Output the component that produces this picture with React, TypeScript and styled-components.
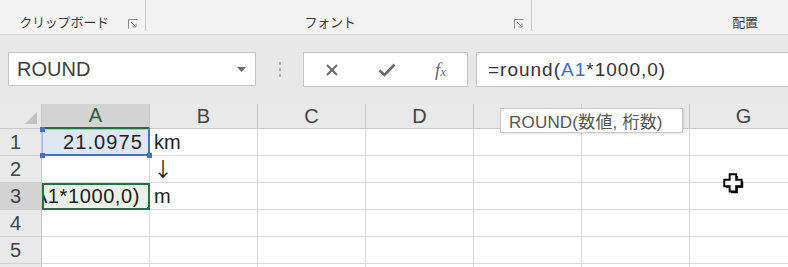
import React from 'react';
import styled, { createGlobalStyle } from 'styled-components';

const GlobalStyle = createGlobalStyle`
  html, body { margin: 0; padding: 0; background: #ffffff; }
  body { font-family: "Liberation Sans", Arial, sans-serif; overflow: hidden; }
`;

const Page = styled.div`
  position: relative;
  width: 788px;
  height: 267px;
  overflow: hidden;
  background: #ffffff;
`;

/* ---------- ribbon ---------- */

const Ribbon = styled.div`
  display: flex;
  align-items: flex-start;
  height: 34px;
  background: #f3f3f3;
  border-bottom: 1px solid #d5d5d5;
`;

const Group = styled.div<{ $w: number; $sep?: boolean }>`
  flex: 0 0 ${p => p.$w}px;
  height: 31px;
  display: flex;
  align-items: flex-end;
  box-sizing: border-box;
  border-right: ${p => (p.$sep ? '1px solid #c9c9c9' : 'none')};
  padding-right: ${p => (p.$sep ? 7 : 0)}px;
`;

const GroupLabel = styled.div`
  flex: 1;
  text-align: center;
  font-family: "Noto Sans CJK JP", sans-serif;
  font-size: 13px;
  line-height: 18px;
  color: #3c3c3c;
  letter-spacing: -0.2px;
`;

const Launcher = styled.svg`
  flex: 0 0 10px;
  width: 10px;
  height: 10px;
  margin-bottom: 2px;
`;

/* ---------- formula bar ---------- */

const FormulaArea = styled.div`
  display: flex;
  align-items: flex-start;
  height: 69px;
  padding: 17px 0 0 8px;
  box-sizing: border-box;
  background: #e8e8e8;
`;

const NameBox = styled.div`
  flex: 0 0 248px;
  height: 34px;
  box-sizing: border-box;
  display: flex;
  align-items: center;
  justify-content: space-between;
  padding: 0 9px 0 8px;
  background: #ffffff;
  border: 1px solid #c6c6c6;
  font-size: 20px;
  color: #404040;
`;

const DropArrow = styled.svg`
  width: 9px;
  height: 5px;
`;

const Dots = styled.div`
  flex: 0 0 47px;
  height: 34px;
  display: flex;
  flex-direction: column;
  align-items: center;
  justify-content: center;
  gap: 3px;
  & > span {
    width: 2px;
    height: 3px;
    background: #b0b0b0;
  }
`;

const ButtonBox = styled.div`
  flex: 0 0 165px;
  height: 35px;
  box-sizing: border-box;
  display: flex;
  align-items: center;
  justify-content: space-between;
  padding: 0 21px 0 21px;
  background: #ffffff;
  border: 1px solid #c6c6c6;
`;

const Fx = styled.span`
  font-family: "Liberation Serif", "Times New Roman", serif;
  font-style: italic;
  font-size: 19px;
  color: #6a6a6a;
  & > small { font-size: 13px; }
`;

const FormulaInput = styled.div`
  flex: 1;
  height: 35px;
  margin-left: 8px;
  box-sizing: border-box;
  display: flex;
  align-items: center;
  padding-left: 11px;
  background: #ffffff;
  border: 1px solid #c6c6c6;
  border-right: none;
  font-size: 19px;
  color: #333333;
  letter-spacing: 1px;
`;

const Ref = styled.span`
  color: #3b6fc0;
`;

/* ---------- grid ---------- */

const Sheet = styled.div`
  display: grid;
  grid-template-columns: 42px repeat(7, 108px);
  grid-template-rows: 25px repeat(6, 27px);
  background: #ffffff;
`;

const Corner = styled.div`
  background: #e9e9e9;
  border-right: 1px solid #c8c8c8;
  border-bottom: 1px solid #c8c8c8;
  display: flex;
  align-items: flex-end;
  justify-content: flex-end;
  padding: 0 4px 4px 0;
`;

const ColHead = styled.div<{ $active?: boolean }>`
  box-sizing: border-box;
  display: flex;
  align-items: center;
  justify-content: center;
  font-size: 20px;
  color: ${p => (p.$active ? '#2f5d3f' : '#444444')};
  background: ${p => (p.$active ? '#d3d3d3' : '#e9e9e9')};
  border-right: 1px solid #c8c8c8;
  border-bottom: ${p => (p.$active ? '2px solid #217346' : '1px solid #c8c8c8')};
`;

const RowHead = styled.div<{ $active?: boolean }>`
  box-sizing: border-box;
  display: flex;
  align-items: center;
  padding-left: 10px;
  font-size: 20px;
  color: #444444;
  background: ${p => (p.$active ? '#d3d3d3' : '#e9e9e9')};
  border-right: 1px solid #c8c8c8;
  border-bottom: 1px solid #d0d0d0;
`;

const Cell = styled.div<{ $align?: 'left' | 'right'; $pad?: number }>`
  position: relative;
  box-sizing: border-box;
  display: flex;
  align-items: center;
  justify-content: ${p => (p.$align === 'right' ? 'flex-end' : 'flex-start')};
  padding: 0 4px 0 ${p => p.$pad ?? 4}px;
  font-size: 20px;
  color: #222222;
  white-space: nowrap;
  border-right: 1px solid #dadada;
  border-bottom: 1px solid #dadada;
`;

const Arrow = styled.span`
  font-family: "Noto Sans CJK JP", sans-serif;
  font-size: 20px;
  line-height: 1;
  color: #1a1a1a;
`;

const RefCell = styled(Cell)`
  background: #dfe7f3;
  border-top: 1px solid #a9bfe2;
  border-left: 1px solid #a9bfe2;
  border-right: 2px solid #4472c4;
  border-bottom: 2px solid #4472c4;
  padding-right: 5px;
  letter-spacing: 1.1px;
`;

const EditCell = styled(Cell)`
  overflow: hidden;
  justify-content: flex-end;
  background: #eaf1e6;
  border: 2px solid #217346;
  padding-right: 8px;
  font-size: 20px;
  letter-spacing: 0.6px;
  color: #1d1d1d;
`;

const Handle = styled.span<{ $color: string; $x: 'l' | 'r'; $y: 't' | 'b' }>`
  position: absolute;
  width: 5px;
  height: 5px;
  background: ${p => p.$color};
  ${p => (p.$x === 'l' ? 'left: -3px;' : 'right: -4px;')}
  ${p => (p.$y === 't' ? 'top: -3px;' : 'bottom: -4px;')}
  z-index: 2;
`;

const Tooltip = styled.div`
  position: absolute;
  left: 500px;
  top: 108px;
  width: 183px;
  height: 25px;
  box-sizing: border-box;
  display: flex;
  align-items: center;
  padding-left: 8px;
  background: #ffffff;
  border: 1px solid #c9c9c9;
  box-shadow: 1px 1px 2px rgba(0, 0, 0, 0.12);
  font-family: "Liberation Sans", "Noto Sans CJK JP", sans-serif;
  font-size: 17px;
  letter-spacing: 0.2px;
  color: #555555;
`;

const Cursor = styled.svg`
  position: absolute;
  left: 721px;
  top: 171px;
  width: 26px;
  height: 26px;
`;

const cols = ['A', 'B', 'C', 'D', 'E', 'F', 'G'];

const LauncherIcon = () => (
  <Launcher viewBox="0 0 10 10">
    <path d="M0.5 9.5V0.5H9.5" fill="none" stroke="#8a8a8a" strokeWidth="1" />
    <path d="M3 3L8 8M8 4.5V8H4.5" fill="none" stroke="#8a8a8a" strokeWidth="1" />
  </Launcher>
);

export default function App() {
  const rows = [1, 2, 3, 4, 5, 6];

  const renderCell = (r: number, c: number) => {
    const key = `${r}-${c}`;
    if (r === 1 && c === 0) {
      return (
        <RefCell key={key} $align="right">
          21.0975
          <Handle $color="#4472c4" $x="l" $y="t" />
          <Handle $color="#4472c4" $x="l" $y="b" />
          <Handle $color="#4472c4" $x="r" $y="b" />
        </RefCell>
      );
    }
    if (r === 3 && c === 0) {
      return (
        <EditCell key={key}>
          <span>=round(A1*1000,0)</span>
          <Handle $color="#217346" $x="r" $y="b" />
        </EditCell>
      );
    }
    if (r === 1 && c === 1) return <Cell key={key}>km</Cell>;
    if (r === 2 && c === 1)
      return (
        <Cell key={key} $pad={3}>
          <Arrow>↓</Arrow>
        </Cell>
      );
    if (r === 3 && c === 1) return <Cell key={key}>m</Cell>;
    return <Cell key={key} />;
  };

  return (
    <Page>
      <GlobalStyle />
      <Ribbon>
        <Group $w={146} $sep>
          <GroupLabel>クリップボード</GroupLabel>
          <LauncherIcon />
        </Group>
        <Group $w={386} $sep>
          <GroupLabel>フォント</GroupLabel>
          <LauncherIcon />
        </Group>
        <Group $w={426}>
          <GroupLabel>配置</GroupLabel>
        </Group>
      </Ribbon>

      <FormulaArea>
        <NameBox>
          <span>ROUND</span>
          <DropArrow viewBox="0 0 9 5">
            <path d="M0 0H9L4.5 5Z" fill="#6b6b6b" />
          </DropArrow>
        </NameBox>
        <Dots>
          <span />
          <span />
          <span />
        </Dots>
        <ButtonBox>
          <svg width="14" height="14" viewBox="0 0 14 14">
            <path d="M2 2L12 12M12 2L2 12" stroke="#6b6b6b" strokeWidth="2" />
          </svg>
          <svg width="18" height="14" viewBox="0 0 18 14">
            <path d="M1.5 7.5L6.5 12L16.5 1.5" fill="none" stroke="#6b6b6b" strokeWidth="2.6" />
          </svg>
          <Fx>
            f<small>x</small>
          </Fx>
        </ButtonBox>
        <FormulaInput>
          =round(<Ref>A1</Ref>*1000,0)
        </FormulaInput>
      </FormulaArea>

      <Sheet>
        <Corner>
          <svg width="12" height="12" viewBox="0 0 12 12">
            <path d="M12 0V12H0Z" fill="#c2c2c2" />
          </svg>
        </Corner>
        {cols.map((c, i) => (
          <ColHead key={c} $active={i === 0}>
            {c}
          </ColHead>
        ))}
        {rows.map(r => (
          <React.Fragment key={r}>
            <RowHead $active={r === 3}>{r}</RowHead>
            {cols.map((_, c) => renderCell(r, c))}
          </React.Fragment>
        ))}
      </Sheet>

      <Tooltip>ROUND(数値, 桁数)</Tooltip>

      <Cursor viewBox="0 0 24 24">
        <path d="M8 3H14V8H19V14H14V19H8V14H3V8H8Z" fill="#000" transform="translate(1.5 1.5)" />
        <path d="M8 3H14V8H19V14H14V19H8V14H3V8H8Z" fill="#fff" stroke="#000" strokeWidth="1.8" />
      </Cursor>
    </Page>
  );
}
